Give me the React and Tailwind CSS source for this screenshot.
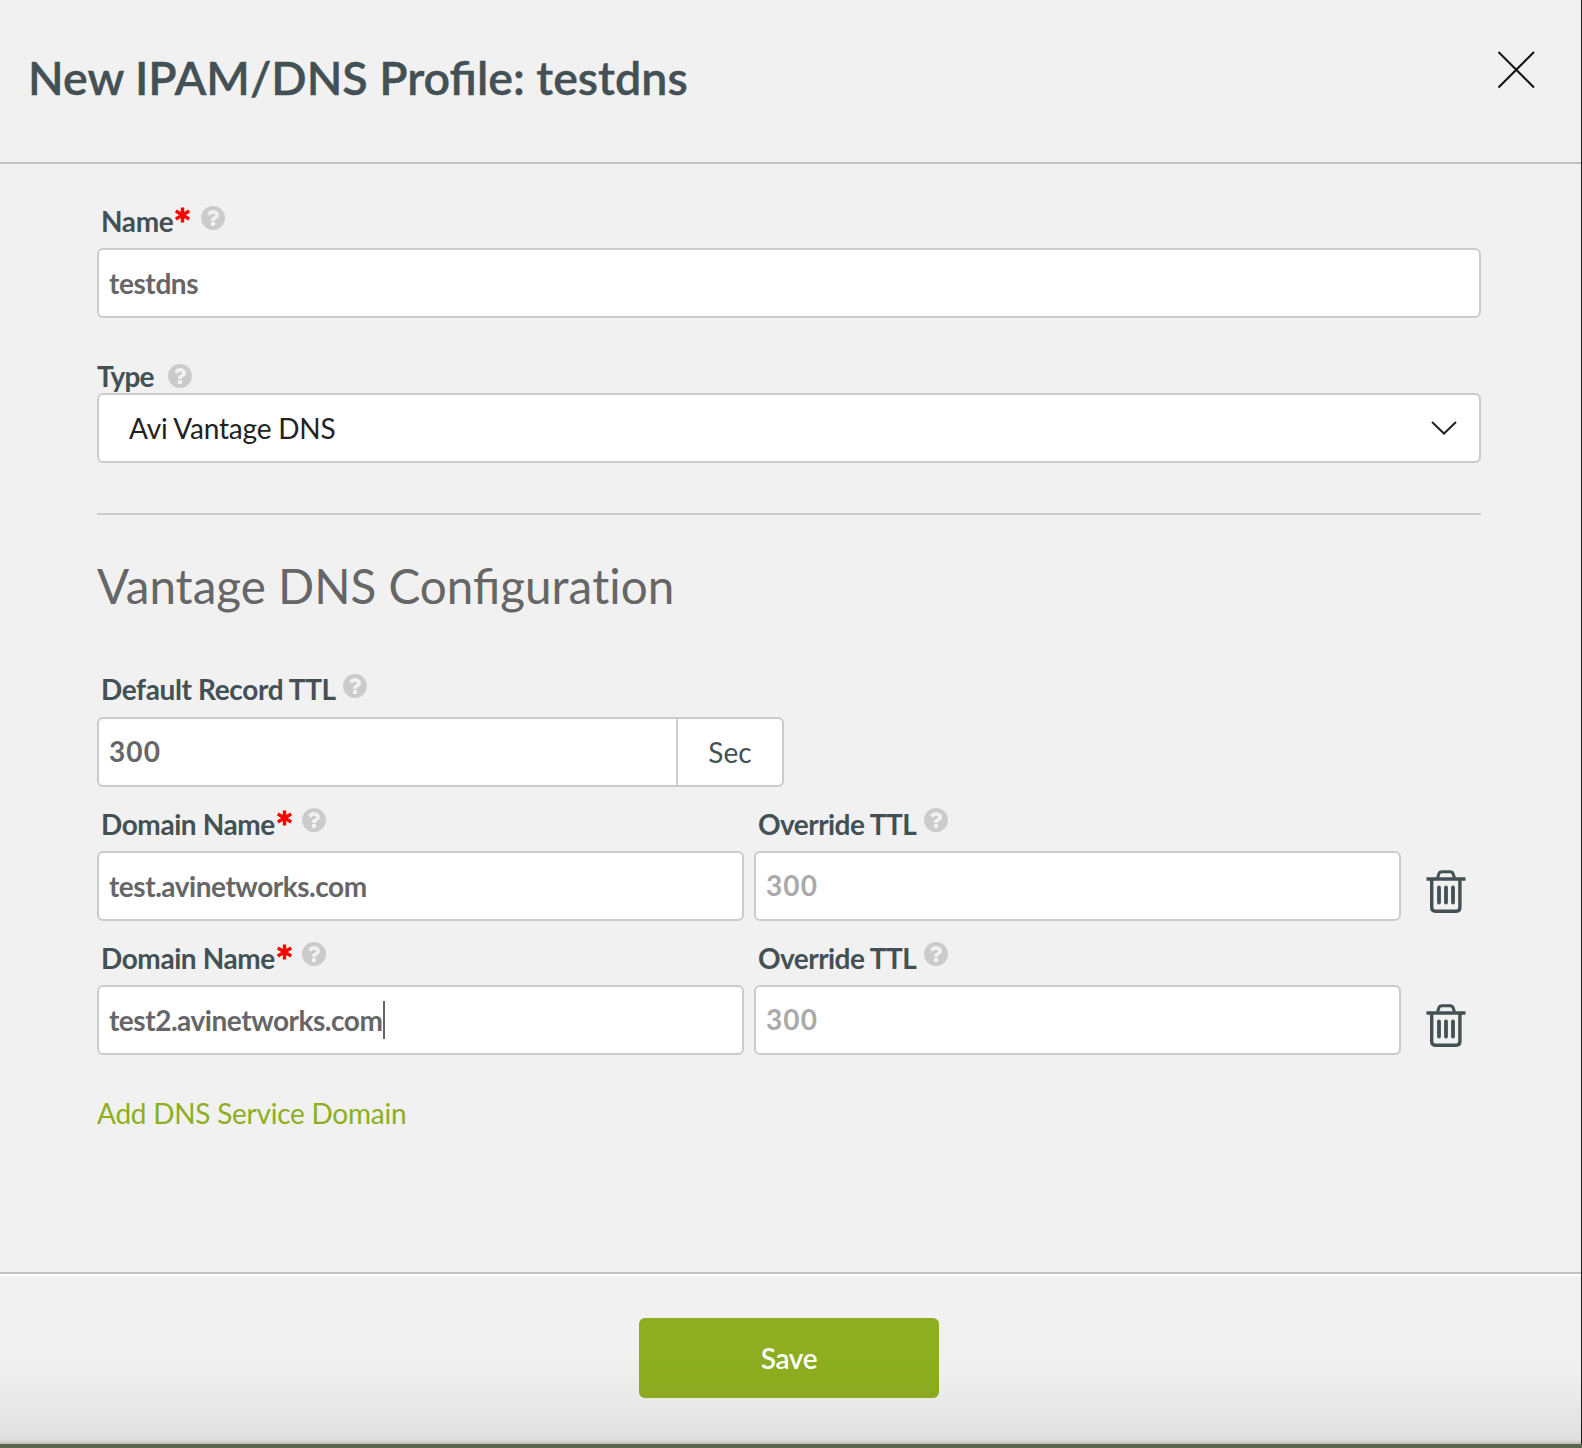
import React from "react";

function HelpIcon({ className = "" }) {
  return (
    <svg viewBox="128 128 1536 1536" className={`size-6 shrink-0 fill-[#cbcbcb] ${className}`}>
      <path d="M1024 1376v-192q0-14-9-23t-23-9h-192q-14 0-23 9t-9 23v192q0 14 9 23t23 9h192q14 0 23-9t9-23zm256-672q0-88-55.5-163t-138.5-116-170-41q-243 0-371 213-15 24 8 42l132 100q7 6 19 6 16 0 25-12 53-68 86-92 34-24 86-24 48 0 85.5 26t37.5 59q0 38-20 61t-68 45q-63 28-115.5 86.5t-52.5 125.5v36q0 14 9 23t23 9h192q14 0 23-9t9-23q0-19 21.5-49.5t54.5-49.5q32-18 49-28.5t46-35 44.5-48 28-60.5 12.5-81zm384 192q0 209-103 385.5t-279.5 279.5-385.5 103-385.5-103-279.5-279.5-103-385.5 103-385.5 279.5-279.5 385.5-103 385.5 103 279.5 279.5 103 385.5z" />
    </svg>
  );
}

function Required({ className = "" }) {
  return (
    <svg viewBox="0 0 15 16" className={`-mr-px h-4 w-[15px] shrink-0 stroke-[#ff0000] ${className}`} strokeWidth="3.4">
      <path d="M7.5 0.5V15.5M0.8 4L14.2 12M14.2 4L0.8 12" />
    </svg>
  );
}

function TrashIcon() {
  return (
    <svg viewBox="0 0 40 44" className="h-11 w-10 shrink-0" fill="none" stroke="#435054">
      <path d="M0.5 9H39.5" strokeWidth="3.6" />
      <path d="M11.5 8L12.8 4Q13.6 1.8 16 1.8H24Q26.4 1.8 27.2 4L28.5 8" strokeWidth="3" />
      <path d="M5.7 9V37.5Q5.7 41.2 9.4 41.2H30.2Q33.9 41.2 33.9 37.5V9" strokeWidth="3.4" />
      <path d="M13 17.5V32.5M20 17.5V32.5M27 17.5V32.5" strokeWidth="3.8" strokeLinecap="round" />
    </svg>
  );
}

const FIELD = "flex h-[70px] items-center rounded-md border-2 border-[#cbcbcb] bg-white pl-2.5 text-[28px] leading-[34px]";
const LABEL = "text-[28px] font-bold leading-[34px] text-[#435054]";

function DomainRow({ value, caret }) {
  return (
    <div className="flex h-[134px] items-start">
      <div className="w-[647px]">
        <div className="flex h-16 items-start pl-1 pt-5">
          <span className={`${LABEL} w-44 tracking-[-0.42px]`}>Domain Name</span>
          <Required className="mt-[3px]" />
          <HelpIcon className="ml-[11px] mt-px" />
        </div>
        <div className={`${FIELD} font-bold tracking-[-0.46px] text-[#666666]`}>
          <span className="-mt-px">{value}</span>
          {caret && <span className="ml-px h-[38px] w-0.5 bg-[#666666]" />}
        </div>
      </div>
      <div className="ml-2.5 w-[647px]">
        <div className="flex h-16 items-start pl-1 pt-5">
          <span className={`${LABEL} w-[166px] tracking-[-0.55px]`}>Override TTL</span>
          <HelpIcon className="mt-px" />
        </div>
        <div className={`${FIELD} font-bold text-[#aaaaaa]`}>
          <span className="-mt-0.5 tracking-[1.1px]">300</span>
        </div>
      </div>
      <button className="ml-[25px] mt-[83px]"><TrashIcon /></button>
    </div>
  );
}

export default function App() {
  return (
    <div className="flex h-[1448px] w-[1582px] flex-col overflow-hidden whitespace-nowrap bg-[#f1f1f1] font-['Lato',sans-serif]">
      <div className="flex h-[1444px] flex-col border-r border-[#16191c]">
        <header className="flex h-[164px] items-start justify-between border-b-2 border-[#c2c2c2] pl-7 pr-[46px]">
          <h1 className="mt-[47px] text-[46.5px] font-semibold leading-[60px] text-[#435054] [-webkit-text-stroke:0.4px_#435054]">New IPAM/DNS Profile: testdns</h1>
          <button className="mt-[51px]">
            <svg viewBox="0 0 38 38" className="size-[38px]" fill="none" stroke="#111111" strokeWidth="2">
              <path d="M1.5 1L37 36.5M37 1L1.5 36.5" />
            </svg>
          </button>
        </header>

        <main className="flex h-[1108px] w-[1481px] flex-col pl-[97px]">
          <div className="flex h-[84px] items-start pl-1 pt-11">
            <span className={`${LABEL} -mt-1 w-[74px] tracking-[-0.35px]`}>Name</span>
            <Required className="-mt-px" />
            <HelpIcon className="-mt-[2px] ml-3" />
          </div>
          <div className={`${FIELD} font-bold tracking-[-0.4px] text-[#666666]`}>
            <span className="-mt-px">testdns</span>
          </div>

          <div className="flex h-[75px] items-start pt-[41px]">
            <span className={`${LABEL} w-[71px] tracking-[-0.9px]`}>Type</span>
            <HelpIcon className="mt-[5px]" />
          </div>
          <div className="flex h-[70px] items-center justify-between rounded-md border-2 border-[#cbcbcb] bg-white pl-[30px] pr-[22px] text-[28px] tracking-[-0.2px] text-[#222222]">
            <span className="-mt-px">Avi Vantage DNS</span>
            <svg viewBox="0 0 26 14" className="h-3.5 w-[26px]" fill="none" stroke="#222222" strokeWidth="2">
              <path d="M1 1L13 12.5L25 1" />
            </svg>
          </div>

          <div className="mt-[50px] h-0.5 bg-[#cbcbcb]" />
          <h2 className="mt-[41px] text-[47.6px] leading-[60px] text-[#666666]">
            Vantage DNS Configura<span className="[font-variant-ligatures:none]">ti</span>on
          </h2>

          <div className="flex h-[101px] items-start pl-1 pt-[55px]">
            <span className={`${LABEL} mt-px w-[242px] tracking-[-0.37px]`}>Default Record TTL</span>
            <HelpIcon className="mt-[3px]" />
          </div>
          <div className="flex h-[70px] w-[687px] rounded-md border-2 border-[#cbcbcb] bg-white text-[28px]">
            <div className="flex w-[579px] items-center border-r-2 border-[#cbcbcb] pl-2.5 font-bold tracking-[1.1px] text-[#666666]">
              <span className="-mt-0.5">300</span>
            </div>
            <div className="flex flex-1 items-center justify-center text-[#435054]">Sec</div>
          </div>

          <DomainRow value="test.avinetworks.com" />
          <DomainRow value="test2.avinetworks.com" caret />

          <a className="mt-[41px] text-[28px] leading-[34px] tracking-[-0.25px] text-[#8eae20]">Add DNS Service Domain</a>
        </main>

        <footer className="relative flex h-[172px] items-start justify-center border-t-2 border-[#c2c2c2] pr-[3px]">
          <button className="mt-11 h-20 w-[300px] rounded-md bg-[#8eae20] text-[28px] font-semibold tracking-[-0.4px] text-white">Save</button>
          <div className="absolute inset-x-0 top-0 h-0.5 bg-white" />
          <div className="pointer-events-none absolute inset-x-0 bottom-0 h-[96px] bg-[linear-gradient(to_bottom,rgba(0,0,0,0),rgba(0,0,0,0.01)_30%,rgba(0,0,0,0.07)_94%,rgba(0,0,0,0.13)_98%,rgba(0,0,0,0.25))]" />
        </footer>
      </div>
      <div className="h-1 bg-[#59684c]" />
    </div>
  );
}
